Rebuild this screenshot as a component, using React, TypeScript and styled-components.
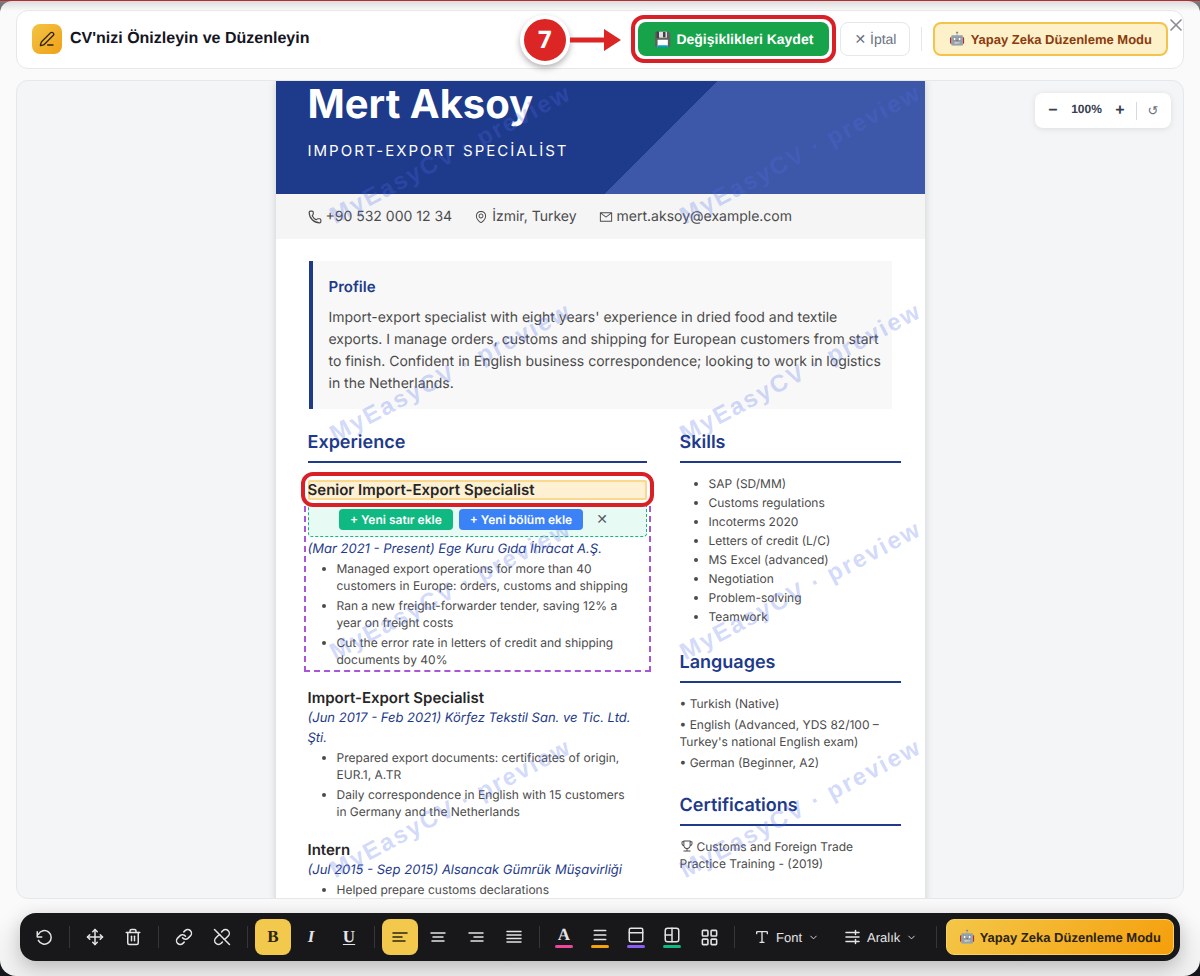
import React from "react";
import styled, { createGlobalStyle, css } from "styled-components";
import { ChevronDown, LayoutGrid, Link, Move, PanelTop, PenLine, Phone, Trash2, Type, X } from "lucide-react";
import { AiOutlineEnvironment, AiOutlineMail, AiOutlineTrophy } from "react-icons/ai";

const ui = `"Liberation Sans", Arial, sans-serif`;
const doc = `Inter, "Liberation Sans", sans-serif`;
const serif = `"Liberation Serif", "Times New Roman", serif`;
const navy = "#1e3a8a";

const GlobalStyle = createGlobalStyle`
  *, *::before, *::after { box-sizing: border-box; }
  body { margin: 0; background: #15171c; font-family: ${ui}; text-rendering: geometricPrecision; }
  button { font-family: inherit; text-rendering: inherit; white-space: nowrap; cursor: pointer; }
  h1, h2, h3, p, ul { margin: 0; padding: 0; }
`;

const Backdrop = styled.div`
  height: 100vh;
  border-top: 1px solid #b32d2d;
  background: linear-gradient(#7d7d80 0, #15171c 40px);
`;

const Modal = styled.main`
  position: relative;
  display: flex;
  flex-direction: column;
  height: 100%;
  padding: 9px 16px 15px;
  border-radius: 12px 12px 16px 16px;
  background: linear-gradient(#dcdcde, #fafafa 10px, #fafafa calc(100% - 60px), #f0f0f0);
`;

const TopBar = styled.header`
  display: flex;
  align-items: center;
  gap: 8px;
  flex: none;
  height: 59px;
  padding: 0 15px 1px;
  border: 1px solid #e8e8ea;
  border-radius: 12px;
  background: #fff;
`;

const TitleIcon = styled.span`
  display: grid;
  place-items: center;
  width: 30px;
  height: 30px;
  border-radius: 8px;
  background: linear-gradient(135deg, #f3c445, #f0a018);
  color: #2b2410;
`;

const Title = styled.h1`
  flex: 1;
  font-size: 16px;
  line-height: 20px;
  color: #15151f;
`;

const SaveArea = styled.div`
  position: relative;
  margin-right: 3px;
`;

const SaveButton = styled.button`
  display: flex;
  align-items: center;
  gap: 5px;
  height: 34px;
  padding: 0 16px;
  border: 0;
  border-radius: 8px;
  background: #16a34a;
  color: #fff;
  font-size: 14px;
  font-weight: 700;
`;

const SaveRing = styled.span`
  position: absolute;
  inset: -7px;
  border: 4px solid #d92027;
  border-radius: 13px;
  pointer-events: none;
`;

const Callout = styled.div`
  position: absolute;
  right: calc(100% + 17px);
  top: -7px;
  display: flex;
  align-items: center;
`;

const StepBadge = styled.span`
  display: grid;
  place-items: center;
  width: 50px;
  height: 50px;
  border: 4px solid #fff;
  border-radius: 50%;
  background: #dc2626;
  box-shadow: 0 3px 6px rgba(0, 0, 0, 0.3);
  color: #fff;
  font: 700 24px/1 "Open Sans", sans-serif;
`;

const CancelButton = styled.button`
  height: 34px;
  padding: 0 13px;
  border: 1px solid #e5e7eb;
  border-radius: 8px;
  background: #fff;
  color: #6b7280;
  font-size: 14px;
`;

const TopDivider = styled.span`
  width: 1px;
  height: 24px;
  margin: 0 3px;
  background: #e5e7eb;
`;

const AiModeButton = styled.button`
  display: flex;
  align-items: center;
  gap: 5px;
  height: 34px;
  padding: 0 14px;
  border: 2px solid #f3c34b;
  border-radius: 8px;
  background: #fdf1c9;
  color: #8a3b0f;
  font-size: 13px;
  font-weight: 700;
`;

const CloseButton = styled.button`
  position: absolute;
  top: 14px;
  right: 14px;
  display: grid;
  padding: 0;
  border: 0;
  background: none;
  color: #8b8e96;
`;

const Stage = styled.section`
  position: relative;
  flex: 1;
  min-height: 0;
  margin: 11px 0 14px;
  border: 1px solid #e5e7eb;
  border-radius: 12px;
  background: #f3f5f7;
  overflow: hidden;
`;

const Scroller = styled.div`
  height: 100%;
  overflow: auto;
  scrollbar-width: none;
`;

const ZoomBox = styled.div`
  position: absolute;
  top: 12px;
  right: 12px;
  display: flex;
  align-items: center;
  height: 35px;
  padding: 0 8px;
  border-radius: 8px;
  background: #fff;
  box-shadow: 0 1px 6px rgba(0, 0, 0, 0.1);
  color: #374151;
`;

const ZoomButton = styled.button<{ $reset?: boolean }>`
  width: 20px;
  height: 24px;
  padding: 0;
  border: 0;
  background: none;
  color: ${(p) => (p.$reset ? "#6b7280" : "#374151")};
  font-size: ${(p) => (p.$reset ? 13 : 16)}px;
  font-weight: ${(p) => (p.$reset ? 400 : 700)};
`;

const ZoomValue = styled.output`
  width: 47px;
  padding-bottom: 3px;
  font-size: 12px;
  font-weight: 700;
  text-align: center;
`;

const ZoomDivider = styled.span`
  width: 1px;
  height: 18px;
  margin: 0 6px;
  background: #d6d9de;
`;

const Paper = styled.article`
  position: relative;
  max-width: 649px;
  min-height: 100%;
  margin: 0 auto;
  background: #fff;
  box-shadow: 0 0 8px rgba(0, 0, 0, 0.16);
  font-family: ${doc};
  font-size: 12px;
  line-height: 17px;
  color: #4b4b4b;
  overflow: hidden;
`;

const Watermark = styled.div`
  position: absolute;
  top: -35px;
  left: 0;
  display: grid;
  grid-template-columns: repeat(2, 350px);
  grid-auto-rows: 218px;
  pointer-events: none;
`;

const Mark = styled.span`
  display: grid;
  place-items: center;
  color: rgba(79, 109, 235, 0.27);
  font: 700 24px/1 ${ui};
  letter-spacing: 2px;
  white-space: nowrap;
  transform: rotate(-28deg);
`;

const Masthead = styled.header`
  padding: 0 32px 31px;
  background: linear-gradient(135deg, ${navy} 58%, #3d58a8 58%);
  color: #fff;
`;

const Name = styled.h2`
  font-size: 40px;
  line-height: 46px;
`;

const Role = styled.p`
  margin-top: 12px;
  font-size: 15px;
  line-height: 24px;
  letter-spacing: 2px;
`;

const Contacts = styled.div`
  display: flex;
  gap: 22px;
  padding: 12px 32px;
  background: #f5f5f5;
  font-size: 14px;
  line-height: 21px;
`;

const Contact = styled.span`
  display: flex;
  align-items: center;
  gap: 4px;
`;

const Profile = styled.section`
  margin: 22px 33px 23px;
  padding: 16px 8px 14px 16px;
  border-left: 4px solid ${navy};
  background: #f8f8f8;
`;

const ProfileTitle = styled.h3`
  margin-bottom: 10px;
  color: ${navy};
  font-size: 15px;
  font-weight: 600;
  line-height: 20px;
`;

const ProfileText = styled.p`
  font-size: 14px;
  line-height: 22px;
`;

const Columns = styled.div`
  display: grid;
  grid-template-columns: minmax(0, 339fr) minmax(0, 221fr);
  gap: 33px;
  padding: 0 24px 0 32px;
`;

const Section = styled.section`
  display: flow-root;
  margin-bottom: 24px;
`;

const Heading = styled.h3<{ $roomy?: boolean }>`
  margin-bottom: ${(p) => (p.$roomy ? 17 : 12)}px;
  padding-bottom: 7px;
  border-bottom: 2px solid ${navy};
  color: ${navy};
  font-size: 18px;
  font-weight: 600;
  line-height: 22px;
`;

const Job = styled.div<{ $selected?: boolean }>`
  position: relative;
  margin-bottom: 20px;
  ${(p) =>
    p.$selected &&
    css`
      outline: 2px dashed #a855d8;
      outline-offset: 2px;
    `}
`;

const JobTitle = styled.h3<{ $selected?: boolean }>`
  color: #262626;
  font-size: 15px;
  font-weight: 600;
  line-height: 20px;
  ${(p) =>
    p.$selected &&
    css`
      position: relative;
      z-index: 2;
      border-radius: 2px;
      background: #fdf0d3;
      box-shadow: inset 0 0 0 2px #fad98f;
    `}
`;

const FieldRing = styled.span`
  position: absolute;
  z-index: 1;
  top: -8px;
  left: -7px;
  right: -7px;
  height: 35px;
  border: 4px solid #d92027;
  border-radius: 12px;
  background: #fff;
  pointer-events: none;
`;

const InsertBar = styled.div`
  display: flex;
  align-items: center;
  justify-content: center;
  gap: 6px;
  height: 35px;
  margin: 2px 0;
  border: 1px dashed #10b981;
  border-radius: 4px;
  background: #e8faf4;
`;

const InsertButton = styled.button<{ $tone: string }>`
  height: 21px;
  padding: 0 11px;
  border: 0;
  border-radius: 4px;
  background: ${(p) => p.$tone};
  color: #fff;
  font-family: ${doc};
  font-size: 12px;
  font-weight: 600;
  line-height: 21px;
`;

const DismissButton = styled.button`
  width: 26px;
  padding: 0;
  border: 0;
  background: none;
  color: #555c66;
  font-size: 14px;
  line-height: 20px;
`;

const Employer = styled.p`
  color: ${navy};
  font-size: 13px;
  font-style: italic;
  line-height: 20px;
`;

const Bullets = styled.ul<{ $tight?: boolean }>`
  display: grid;
  gap: ${(p) => (p.$tight ? 2 : 3)}px;
  margin: ${(p) => (p.$tight ? "5px 0 3px" : "1px 0 0")};
  padding: 0 14px 0 29px;
`;

const Lines = styled.div`
  display: grid;
  gap: 4px;
`;

const Certificate = styled.p`
  padding-right: 14px;
`;

const Trophy = styled(AiOutlineTrophy)`
  margin-right: 3px;
  vertical-align: -2px;
`;

const Toolbar = styled.div`
  display: flex;
  align-items: center;
  gap: 2px;
  flex: none;
  height: 48px;
  margin: 0 4px;
  padding: 0 6px;
  border-radius: 16px;
  background: #18181a;
  box-shadow: 0 6px 20px rgba(0, 0, 0, 0.25);
  color: #e4e4e7;
`;

const Tool = styled.button<{ $active?: boolean; $narrow?: boolean }>`
  display: grid;
  flex: none;
  place-items: center;
  align-content: center;
  gap: 1px;
  width: ${(p) => (p.$narrow ? 34 : 36)}px;
  height: 36px;
  padding: 0;
  border: 0;
  border-radius: 8px;
  background: ${(p) => (p.$active ? "#f2c94c" : "none")};
  color: ${(p) => (p.$active ? "#2b2713" : "inherit")};
`;

const Letter = styled.span<{ $kind?: "italic" | "underline" }>`
  font: 700 17px/18px ${serif};
  font-style: ${(p) => (p.$kind === "italic" ? "italic" : "normal")};
  text-decoration: ${(p) => (p.$kind === "underline" ? "underline" : "none")};
  text-underline-offset: 2px;
`;

const Swatch = styled.span<{ $tone: string }>`
  width: 18px;
  height: 3px;
  border-radius: 2px;
  background: ${(p) => p.$tone};
`;

const ToolDivider = styled.span`
  flex: none;
  width: 1px;
  height: 22px;
  margin: 0 5px;
  background: #36363a;
`;

const MenuTool = styled.button`
  display: flex;
  align-items: center;
  gap: 6px;
  height: 36px;
  padding: 0 12px;
  border: 0;
  background: none;
  color: inherit;
  font-size: 13px;
`;

const AiToolButton = styled.button`
  display: flex;
  align-items: center;
  justify-content: center;
  gap: 4px;
  height: 36px;
  margin-left: auto;
  padding: 0 12px;
  border: 1px solid #f6d264;
  border-radius: 8px;
  background: linear-gradient(135deg, #f4c748, #f59e0b);
  color: #2b2410;
  font-size: 13px;
  font-weight: 700;
`;

type LinesIconProps = { rows: [number, number][]; size?: number };

const RowsIcon = ({ rows, size = 16 }: LinesIconProps) => (
  <svg width={size} height={size} viewBox="0 0 16 16" stroke="currentColor" strokeWidth="1.5" strokeLinecap="round">
    {rows.map(([from, to], i) => {
      const y = rows.length === 4 ? 2.5 + i * 3.5 : 4 + i * 4;
      return <path key={i} d={`M${from} ${y}H${to}`} />;
    })}
  </svg>
);

const strokes = {
  width: 18,
  height: 18,
  viewBox: "0 0 24 24",
  fill: "none",
  stroke: "currentColor",
  strokeWidth: 2,
  strokeLinecap: "round",
  strokeLinejoin: "round",
} as const;

const ResetIcon = () => (
  <svg {...strokes}>
    <path d="M3 5v7h6" />
    <path d="M4.5 8.5A9 9 0 1 1 4.5 16.5" />
  </svg>
);

const UnlinkIcon = () => (
  <svg {...strokes}>
    <path d="M11.5 5.2l1.6-1.6a5 5 0 0 1 7.2 7.1l-3 3a5 5 0 0 1-2.3 1.3" />
    <path d="M12.5 18.8l-1.6 1.6a5 5 0 0 1-7.2-7.1l3-3A5 5 0 0 1 9 9" />
    <path d="M2 2l20 20" />
  </svg>
);

const SplitIcon = () => (
  <svg {...strokes}>
    <rect x="3" y="3" width="18" height="18" rx="3" />
    <path d="M12 3v18M3 12h9" />
  </svg>
);

const SpacingIcon = () => (
  <svg width="16" height="16" viewBox="0 0 16 16" fill="none" stroke="currentColor" strokeWidth="1.5" strokeLinecap="round">
    <path d="M1 3.5h13M1 8h13M1 12.5h13M10.5 1.5v4M10.5 10.5v4" />
  </svg>
);

const jobs = [
  {
    title: "Import-Export Specialist",
    employer: "(Jun 2017 - Feb 2021) Körfez Tekstil San. ve Tic. Ltd. Şti.",
    points: [
      "Prepared export documents: certificates of origin, EUR.1, A.TR",
      "Daily correspondence in English with 15 customers in Germany and the Netherlands",
    ],
  },
  {
    title: "Intern",
    employer: "(Jul 2015 - Sep 2015) Alsancak Gümrük Müşavirliği",
    points: ["Helped prepare customs declarations"],
  },
];

const skills = [
  "SAP (SD/MM)",
  "Customs regulations",
  "Incoterms 2020",
  "Letters of credit (L/C)",
  "MS Excel (advanced)",
  "Negotiation",
  "Problem-solving",
  "Teamwork",
];

const languages = ["Turkish (Native)", "English (Advanced, YDS 82/100 – Turkey's national English exam)", "German (Beginner, A2)"];

const Resume = () => (
  <Paper>
    <Masthead>
      <Name>Mert Aksoy</Name>
      <Role>IMPORT-EXPORT SPECİALİST</Role>
    </Masthead>
    <Contacts>
      <Contact><Phone size={14} strokeWidth={2} />+90 532 000 12 34</Contact>
      <Contact><AiOutlineEnvironment size={14} />İzmir, Turkey</Contact>
      <Contact><AiOutlineMail size={14} />mert.aksoy@example.com</Contact>
    </Contacts>
    <Profile>
      <ProfileTitle>Profile</ProfileTitle>
      <ProfileText>
        Import-export specialist with eight years' experience in dried food and textile exports. I manage orders,
        customs and shipping for European customers from start to finish. Confident in English business
        correspondence; looking to work in logistics in the Netherlands.
      </ProfileText>
    </Profile>
    <Columns>
      <Section>
        <Heading $roomy>Experience</Heading>
        <Job $selected>
          <JobTitle $selected>Senior Import-Export Specialist</JobTitle>
          <InsertBar>
            <InsertButton $tone="#10b981">+ Yeni satır ekle</InsertButton>
            <InsertButton $tone="#3b82f6">+ Yeni bölüm ekle</InsertButton>
            <DismissButton aria-label="Kapat">✕</DismissButton>
          </InsertBar>
          <Employer>(Mar 2021 - Present) Ege Kuru Gıda İhracat A.Ş.</Employer>
          <Bullets>
            <li>Managed export operations for more than 40 customers in Europe: orders, customs and shipping</li>
            <li>Ran a new freight-forwarder tender, saving 12% a year on freight costs</li>
            <li>Cut the error rate in letters of credit and shipping documents by 40%</li>
          </Bullets>
          <FieldRing />
        </Job>
        {jobs.map((job) => (
          <Job key={job.title}>
            <JobTitle>{job.title}</JobTitle>
            <Employer>{job.employer}</Employer>
            <Bullets>
              {job.points.map((point) => (
                <li key={point}>{point}</li>
              ))}
            </Bullets>
          </Job>
        ))}
      </Section>
      <div>
        <Section>
          <Heading>Skills</Heading>
          <Bullets $tight>
            {skills.map((skill) => (
              <li key={skill}>{skill}</li>
            ))}
          </Bullets>
        </Section>
        <Section>
          <Heading>Languages</Heading>
          <Lines>
            {languages.map((language) => (
              <p key={language}>• {language}</p>
            ))}
          </Lines>
        </Section>
        <Section>
          <Heading>Certifications</Heading>
          <Certificate><Trophy size={14} />Customs and Foreign Trade Practice Training - (2019)</Certificate>
        </Section>
      </div>
    </Columns>
    <Watermark aria-hidden="true">
      {Array.from({ length: 8 }, (_, i) => (
        <Mark key={i}>MyEasyCV · preview</Mark>
      ))}
    </Watermark>
  </Paper>
);

const EditorToolbar = () => (
  <Toolbar role="toolbar" aria-label="Düzenleme">
    <Tool aria-label="Geri al"><ResetIcon /></Tool>
    <ToolDivider />
    <Tool aria-label="Taşı"><Move size={18} strokeWidth={2} /></Tool>
    <Tool aria-label="Sil"><Trash2 size={18} strokeWidth={2} /></Tool>
    <ToolDivider />
    <Tool aria-label="Bağlantı"><Link size={18} strokeWidth={2} /></Tool>
    <Tool aria-label="Bağlantıyı kaldır"><UnlinkIcon /></Tool>
    <ToolDivider />
    <Tool $active aria-pressed="true"><Letter>B</Letter></Tool>
    <Tool><Letter $kind="italic">I</Letter></Tool>
    <Tool><Letter $kind="underline">U</Letter></Tool>
    <ToolDivider />
    <Tool $active aria-pressed="true" aria-label="Sola hizala"><RowsIcon rows={[[1, 15], [1, 10], [1, 13]]} /></Tool>
    <Tool aria-label="Ortala"><RowsIcon rows={[[1, 15], [3, 13], [2, 14]]} /></Tool>
    <Tool aria-label="Sağa hizala"><RowsIcon rows={[[1, 15], [6, 15], [3, 15]]} /></Tool>
    <Tool aria-label="İki yana yasla"><RowsIcon rows={[[1, 15], [1, 15], [1, 15], [1, 15]]} /></Tool>
    <ToolDivider />
    <Tool $narrow><Letter>A</Letter><Swatch $tone="#ec4899" /></Tool>
    <Tool $narrow aria-label="Vurgu rengi"><RowsIcon rows={[[3, 13], [3, 13], [3, 13]]} size={18} /><Swatch $tone="#f5a30b" /></Tool>
    <Tool $narrow aria-label="Bölüm rengi"><PanelTop size={18} /><Swatch $tone="#8b5cf6" /></Tool>
    <Tool $narrow aria-label="Sütun rengi"><SplitIcon /><Swatch $tone="#10b981" /></Tool>
    <Tool aria-label="Düzen"><LayoutGrid size={19} /></Tool>
    <ToolDivider />
    <MenuTool><Type size={16} />Font<ChevronDown size={11} /></MenuTool>
    <MenuTool><SpacingIcon />Aralık<ChevronDown size={11} /></MenuTool>
    <ToolDivider />
    <AiToolButton><span>🤖</span>Yapay Zeka Düzenleme Modu</AiToolButton>
  </Toolbar>
);

export default function App() {
  return (
    <Backdrop>
      <GlobalStyle />
      <Modal>
        <TopBar>
          <TitleIcon><PenLine size={16} /></TitleIcon>
          <Title>CV'nizi Önizleyin ve Düzenleyin</Title>
          <SaveArea>
            <SaveButton><span>💾</span>Değişiklikleri Kaydet</SaveButton>
            <SaveRing />
            <Callout>
              <StepBadge>7</StepBadge>
              <svg width="51" height="24" viewBox="0 0 51 24" fill="#dc2626">
                <path d="M0 9.5h34V1l17 11-17 11v-8.5H0z" />
              </svg>
            </Callout>
          </SaveArea>
          <CancelButton>✕ İptal</CancelButton>
          <TopDivider />
          <AiModeButton><span>🤖</span>Yapay Zeka Düzenleme Modu</AiModeButton>
        </TopBar>
        <CloseButton aria-label="Kapat"><X size={20} strokeWidth={2} /></CloseButton>
        <Stage>
          <Scroller>
            <Resume />
          </Scroller>
          <ZoomBox>
            <ZoomButton aria-label="Uzaklaştır">−</ZoomButton>
            <ZoomValue>100%</ZoomValue>
            <ZoomButton aria-label="Yakınlaştır">+</ZoomButton>
            <ZoomDivider />
            <ZoomButton $reset aria-label="Sıfırla">↺</ZoomButton>
          </ZoomBox>
        </Stage>
        <EditorToolbar />
      </Modal>
    </Backdrop>
  );
}
